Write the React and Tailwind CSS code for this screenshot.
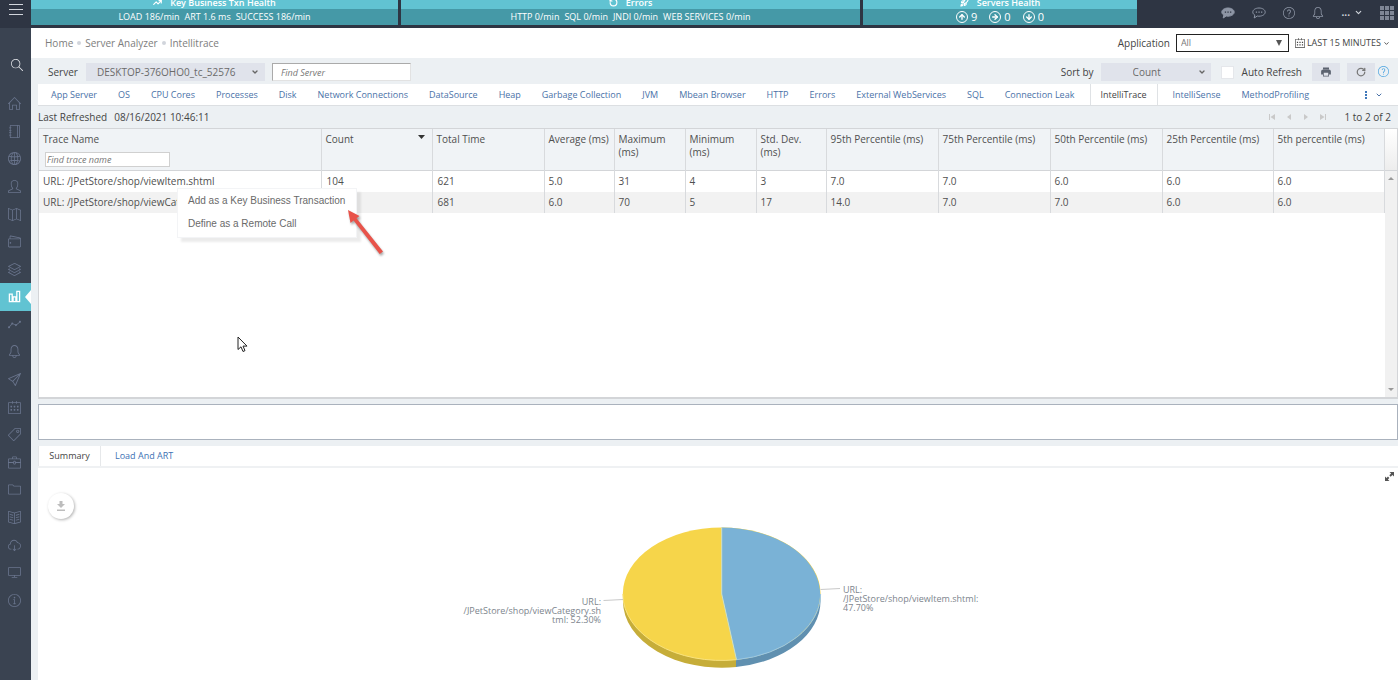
import { useState } from 'react';
import {
  SlHome, SlNotebook, SlGlobe, SlUser, SlMap, SlWallet, SlLayers, SlGraph, SlBell,
  SlPaperPlane, SlCalender, SlTag, SlBriefcase, SlFolder, SlBookOpen, SlCloudDownload,
  SlScreenDesktop, SlInfo, SlMagnifier, SlQuestion,
} from 'react-icons/sl';
import { IoMdPrint } from 'react-icons/io';
import { ChevronDown, ArrowUp, ArrowRight, ArrowDown, TrendingUp, Rocket, RotateCw, RotateCcw } from 'lucide-react';

const BarsIcon = ({ className }) => (
  <svg viewBox="0 0 14 14" className={className} fill="none" stroke="currentColor" strokeWidth="1.4">
    <path d="M1.500 4.500h3v8h-3zM5.500 7.500h3v5h-3zM9.500 1.500h3v11h-3z" />
  </svg>
);

const BubbleIcon = ({ filled }) => (
  <svg viewBox="0 0 14 12" className="h-3 w-[14px]">
    <path
      d="M7 1c3.500 0 6.200 1.800 6.200 4.100S10.500 9.200 7 9.200c-.6 0-1.200 0-1.700-.2L2.200 11l.6-2.900C1.600 7.400.8 6.300.8 5.100.8 2.800 3.500 1 7 1z"
      fill={filled ? 'currentColor' : 'none'}
      stroke="currentColor"
    />
    <path d="M3.800 4.500h1.300v1.300H3.800zM6.400 4.500h1.300v1.300H6.400zM9 4.500h1.300v1.300H9z" fill={filled ? '#2e3543' : 'currentColor'} />
  </svg>
);

const navItems = [
  ['Home', SlHome], ['Notebook', SlNotebook], ['Web', SlGlobe], ['Users', SlUser], ['Map', SlMap],
  ['Wallet', SlWallet], ['Layers', SlLayers], ['Analyzer', BarsIcon], ['Trends', SlGraph],
  ['Alerts', SlBell], ['Send', SlPaperPlane], ['Calendar', SlCalender], ['Tags', SlTag],
  ['Briefcase', SlBriefcase], ['Folder', SlFolder], ['Docs', SlBookOpen],
  ['Cloud', SlCloudDownload], ['Desktop', SlScreenDesktop], ['Info', SlInfo],
];

const tabs = [
  'App Server', 'OS', 'CPU Cores', 'Processes', 'Disk', 'Network Connections', 'DataSource', 'Heap',
  'Garbage Collection', 'JVM', 'Mbean Browser', 'HTTP', 'Errors', 'External WebServices', 'SQL',
  'Connection Leak', 'IntelliTrace', 'IntelliSense', 'MethodProfiling',
];

const columns = [
  ['Trace Name', 'w-[282px]'], ['Count', 'w-[111px]'], ['Total Time', 'w-[112px]'],
  ['Average (ms)', 'w-[70px]'], ['Maximum (ms)', 'w-[71px]'], ['Minimum (ms)', 'w-[71px]'],
  ['Std. Dev. (ms)', 'w-[70px] pr-1'], ['95th Percentile (ms)', 'w-[112px]'],
  ['75th Percentile (ms)', 'w-[112px]'], ['50th Percentile (ms)', 'w-[112px]'],
  ['25th Percentile (ms)', 'w-[111px]'], ['5th percentile (ms)', 'w-[111px]'],
];

const rows = [
  ['URL: /JPetStore/shop/viewItem.shtml', '104', '621', '5.0', '31', '4', '3', '7.0', '7.0', '6.0', '6.0', '6.0'],
  ['URL: /JPetStore/shop/viewCategory.shtml', '114', '681', '6.0', '70', '5', '17', '14.0', '7.0', '7.0', '6.0', '6.0'],
];

const HealthCard = ({ icon, title, className, children }) => (
  <section className={`flex flex-col text-white ${className}`}>
    <h2 className="flex h-[9px] items-center justify-center gap-2 bg-[#61c3d2] pb-1 text-[9px] leading-3 font-semibold">
      {icon}
      {title}
    </h2>
    <div className="flex h-4 items-center justify-center gap-[5px] bg-[#4599a7] text-[9px] whitespace-nowrap">
      {children}
    </div>
  </section>
);

const ServerCount = ({ icon: Icon, value }) => (
  <span className="flex items-center gap-[3px] text-[11px]">
    <span className="flex size-3 items-center justify-center rounded-full border border-white">
      <Icon className="size-2" strokeWidth={4} />
    </span>
    {value}
  </span>
);

const TopBar = () => (
  <header className="flex h-7 bg-[#2e3543]">
    <button aria-label="Menu" className="flex w-[31px] shrink-0 flex-col items-center gap-1 pt-1">
      <span className="h-px w-[14px] bg-gray-300" />
      <span className="h-px w-[14px] bg-gray-300" />
      <span className="h-px w-[14px] bg-gray-300" />
    </button>
    <div className="flex flex-1 gap-[3px]">
      <HealthCard className="flex-[367]" title="Key Business Txn Health" icon={<TrendingUp className="size-[9px]" strokeWidth={3} />}>
        <span>LOAD 186/min</span>
        <span>ART 1.6 ms</span>
        <span>SUCCESS 186/min</span>
      </HealthCard>
      <HealthCard className="flex-[459]" title="Errors" icon={<RotateCcw className="size-[9px]" strokeWidth={3} />}>
        <span>HTTP 0/min</span>
        <span>SQL 0/min</span>
        <span>JNDI 0/min</span>
        <span>WEB SERVICES 0/min</span>
      </HealthCard>
      <HealthCard className="flex-[274]" title="Servers Health" icon={<Rocket className="size-[9px]" strokeWidth={3} />}>
        <div className="flex gap-3">
          <ServerCount icon={ArrowUp} value="9" />
          <ServerCount icon={ArrowRight} value="0" />
          <ServerCount icon={ArrowDown} value="0" />
        </div>
      </HealthCard>
    </div>
    <div className="flex w-[261px] shrink-0 items-center justify-end gap-[17px] pr-1 pb-[3px] text-[#8d95a5]">
      <button aria-label="Chat"><BubbleIcon filled /></button>
      <button aria-label="Feedback"><BubbleIcon /></button>
      <button aria-label="Help"><SlQuestion className="size-3" /></button>
      <button aria-label="Notifications"><SlBell className="size-3" /></button>
      <button aria-label="Account" className="flex items-center gap-1 text-[10px] font-bold text-gray-300">
        ... <ChevronDown className="size-[9px]" strokeWidth={3} />
      </button>
      <button aria-label="Apps" className="grid grid-cols-3 gap-px">
        {[...Array(9)].map((_, i) => <span key={i} className="size-1 bg-[#7f8695]" />)}
      </button>
    </div>
  </header>
);

const Sidebar = () => (
  <aside className="flex w-[31px] shrink-0 flex-col bg-[#3a4351]">
    <button aria-label="Search" className="flex h-[62px] items-center justify-center pt-3 pl-[2px] text-gray-200">
      <SlMagnifier className="size-3" />
    </button>
    <nav className="grid h-[524px] auto-rows-fr">
      {navItems.map(([label, Icon]) => {
        const active = label === 'Analyzer';
        return (
          <a
            key={label}
            href="#"
            aria-label={label}
            className={`relative flex items-center pl-2 ${active ? 'bg-[#61c3d2] text-white' : 'text-[#69748c]'}`}
          >
            <Icon className="size-[13px]" />
            {active && (
              <span className="absolute top-1/2 right-0 -translate-y-1/2 border-y-[7px] border-r-[6px] border-y-transparent border-r-white" />
            )}
          </a>
        );
      })}
    </nav>
  </aside>
);

const PagerIcon = ({ label, d }) => (
  <button aria-label={label}>
    <svg viewBox="0 0 8 8" className="size-2 fill-[#c9c9c9]"><path d={d} /></svg>
  </button>
);

const ContextMenu = () => (
  <div className="absolute top-[15px] left-[134px] z-10 flex w-[180px] flex-col border border-gray-100 bg-white py-[1px] font-['Liberation_Sans',sans-serif] text-[10px] text-[#6a6a6a] shadow-[4px_4px_2px_rgba(0,0,0,0.08)]">
    <button className="h-[23px] px-[10px] text-left whitespace-nowrap">Add as a Key Business Transaction</button>
    <button className="h-[23px] px-[10px] text-left whitespace-nowrap">Define as a Remote Call</button>
    <svg viewBox="0 0 44 52" className="absolute top-[18px] left-[166px] h-[52px] w-11 drop-shadow-[1px_2px_1px_rgba(0,0,0,0.35)]">
      <path d="M4 3l11.500 6-3 2.300L39 44.500l-3.300 2.600L9.600 13.600 6.500 16z" fill="#e8534a" />
    </svg>
  </div>
);

const TraceTable = () => (
  <div className="relative flex h-[271px] border border-b-2 border-[#d3d5d8] bg-white">
    <div className="flex-1">
      <table className="w-full table-fixed border-collapse text-left text-[10px] text-[#4f4f4f]">
        <thead>
          <tr className="h-[41px] border-b border-[#d3d5d8] bg-[#f0f3f6]">
            {columns.map(([name, width], i) => (
              <th key={name} className={`border-r border-[#d8dadd] pt-1 pl-1 align-top leading-[13px] font-normal ${width}`}>
                {i === 1 ? (
                  <span className="flex items-start justify-between pr-[7px]">
                    Count
                    <svg viewBox="0 0 7 4" className="mt-[2px] h-1 w-[7px] fill-[#333]"><path d="M0 0h7L3.500 4z" /></svg>
                  </span>
                ) : name}
                {i === 0 && (
                  <input
                    aria-label="Find trace name"
                    placeholder="Find trace name"
                    className="mt-[6px] ml-[2px] block h-[15px] w-[125px] border border-[#d0d0d0] bg-white px-[1px] text-[9px] italic placeholder:text-[#777]"
                  />
                )}
              </th>
            ))}
          </tr>
        </thead>
        <tbody>
          {rows.map((row, r) => (
            <tr key={row[0]} className={r ? 'h-[21px] bg-[#f2f2f2]' : 'h-[22px]'}>
              {row.map((cell, i) => (
                <td key={i} className={`border-r border-[#d8dadd] p-0 pb-px leading-4 whitespace-nowrap ${i === 1 || i === 2 ? 'pl-[5px]' : 'pl-1'}`}>
                  {r === 0 && i === 0 ? <div className="relative">{cell}<ContextMenu /></div> : cell}
                </td>
              ))}
            </tr>
          ))}
        </tbody>
      </table>
    </div>
    <div className="flex w-[13px] flex-col">
      <div className="h-[42px] border-b border-[#d3d5d8] bg-gradient-to-b from-white to-[#ededed]" />
      <div className="flex flex-1 flex-col items-center justify-between bg-[#f1f1f1] py-[6px]">
        <svg viewBox="0 0 6 3" className="h-[3px] w-[6px] fill-[#999]"><path d="M3 0l3 3H0z" /></svg>
        <svg viewBox="0 0 6 3" className="h-[3px] w-[6px] fill-[#999]"><path d="M3 3l3-3H0z" /></svg>
      </div>
    </div>
    {/* mouse pointer */}
    <svg viewBox="0 0 11 17" className="absolute top-[207px] left-[198px] h-[17px] w-[11px]">
      <path d="M1 1v12.500l3-2.700 2 4.700 2-.9-2-4.500h4z" fill="#fff" stroke="#222" />
    </svg>
  </div>
);

const PieChart = () => (
  <div className="flex items-start justify-center pt-[22px] pl-2 text-[9px] leading-[9px] text-[#7d858d]">
    <p className="mt-[72px] w-[138px] text-right">
      URL:<br />/JPetStore/shop/viewCategory.sh<br />tml: 52.30%
    </p>
    <svg viewBox="601 525 242 145" className="h-[145px] w-[242px]">
      <path d="M623 594v7a99 66.500 0 0 0 113.500 66v-7z" fill="#c6ad39" />
      <path d="M820.500 594v7a99 66.500 0 0 1-84.500 66v-8z" fill="#6090b0" />
      <ellipse cx="721.700" cy="594" rx="98.900" ry="66.500" fill="#f6d54a" />
      <path d="M721.700 527.500a98.900 66.500 0 0 1 14.800 132.200L721.700 594z" fill="#7ab2d6" />
      <path d="M721.700 527.500V594l14.800 65.700" fill="none" stroke="#cfe0c4" />
      <path d="M820.600 594a98.900 66.500 0 0 1-84.100 65.700" fill="none" stroke="#9cc8e4" />
      <path d="M622.800 594a98.900 66.500 0 0 0 113.700 65.700" fill="none" stroke="#f9e37f" />
      <path d="M603.500 600.500l19.500-1M820.500 589.500l19.500-1" stroke="#c9c9c9" />
    </svg>
    <p className="mt-[60px] w-[138px]">
      URL:<br />/JPetStore/shop/viewItem.shtml:<br />47.70%
    </p>
  </div>
);

const App = () => {
  const [tab, setTab] = useState('IntelliTrace');

  return (
    <div className="flex h-screen flex-col overflow-hidden bg-white pb-[2px] font-['Open_Sans',sans-serif] text-[10px] text-[#444]">
      <TopBar />
      <div className="flex min-h-0 flex-1">
        <Sidebar />
        <main className="flex min-w-0 flex-1 flex-col bg-[#ecf0f3]">
          <div className="flex h-[30px] shrink-0 items-center justify-between bg-white pr-2 pl-[14px]">
            <nav className="flex items-center gap-1 text-[#7d7d7d]">
              <a href="#">Home</a>
              <span className="size-1 rounded-full bg-gray-300" />
              <a href="#">Server Analyzer</a>
              <span className="size-1 rounded-full bg-gray-300" />
              <a href="#">Intellitrace</a>
            </nav>
            <div className="flex items-center gap-[6px]">
              <label htmlFor="application">Application</label>
              <div className="relative">
                <select id="application" className="h-[18px] w-[113px] appearance-none border border-[#222] bg-white px-1 text-[9px] text-[#777]">
                  <option>All</option>
                </select>
                <svg viewBox="0 0 6 6" className="pointer-events-none absolute top-[6px] right-[7px] size-[6px] fill-[#555]"><path d="M0 0h6L3 6z" /></svg>
              </div>
              <button className="flex items-center gap-[2px] text-[9px]">
                <SlCalender className="size-[10px]" />
                LAST 15 MINUTES
                <ChevronDown className="size-[7px]" strokeWidth={3} />
              </button>
            </div>
          </div>

          <div className="flex h-[26px] shrink-0 items-center justify-between pt-[2px] pr-[9px] pl-[17px]">
            <div className="flex items-center">
              <label htmlFor="server" className="w-[38px]">Server</label>
              <div className="relative">
                <select id="server" className="h-[18px] w-[179px] appearance-none bg-[#e0e3eb] pl-[11px] text-[#6a6a6a]">
                  <option>DESKTOP-376OHO0_tc_52576</option>
                </select>
                <ChevronDown className="pointer-events-none absolute top-[5px] right-[6px] size-2 text-[#666]" strokeWidth={4} />
              </div>
              <input
                aria-label="Find Server"
                placeholder="Find Server"
                className="ml-[7px] h-[18px] w-[139px] border border-[#e2e2e2] border-t-[#aaa] border-l-[#aaa] bg-white px-2 text-[9px] italic placeholder:text-[#777]"
              />
            </div>
            <div className="flex items-center">
              <label htmlFor="sort" className="mr-[7px]">Sort by</label>
              <div className="relative">
                <select id="sort" className="h-[18px] w-[110px] appearance-none bg-[#e0e3eb] pl-8 text-[#6a6a6a]">
                  <option>Count</option>
                </select>
                <ChevronDown className="pointer-events-none absolute top-[5px] right-[5px] size-2 text-[#666]" strokeWidth={4} />
              </div>
              <input id="auto" type="checkbox" className="mr-2 ml-[10px] size-[13px] appearance-none border border-gray-200 bg-white" />
              <label htmlFor="auto">Auto Refresh</label>
              <button aria-label="Print" className="ml-[10px] flex h-[18px] w-7 items-center justify-center bg-[#e0e3eb] text-[#5c6370]">
                <IoMdPrint className="size-3" />
              </button>
              <button aria-label="Refresh" className="ml-[7px] flex h-[18px] w-7 items-center justify-center bg-[#e0e3eb] text-[#777]">
                <RotateCw className="size-[10px]" strokeWidth={3} />
              </button>
              <button aria-label="Help" className="ml-[3px] pb-[2px] text-[#4ba3e0]"><SlQuestion className="size-[11px]" /></button>
            </div>
          </div>

          <div className="flex min-h-0 flex-1 flex-col pl-[7px]">
            <div className="flex h-[22px] shrink-0 items-stretch border-b border-[#dcdfe2] bg-white pl-[3px] text-[9px] text-[#4a72a8]">
              {tabs.map((name) => (
                <button
                  key={name}
                  onClick={() => setTab(name)}
                  className={`border-x pr-[10px] pl-[9px] whitespace-nowrap ${name === 'IntelliTrace' ? 'mx-[5px]' : ''} ${tab === name ? 'border-[#dfe2e5] text-[#444]' : 'border-transparent'}`}
                >
                  {name}
                </button>
              ))}
              <div className="ml-auto flex items-center gap-2 pr-[15px]">
                <button aria-label="More" className="flex flex-col gap-px">
                  <span className="size-[2px] bg-[#3f78ba]" />
                  <span className="size-[2px] bg-[#3f78ba]" />
                  <span className="size-[2px] bg-[#3f78ba]" />
                </button>
                <button aria-label="Expand tabs"><ChevronDown className="size-2" strokeWidth={3} /></button>
              </div>
            </div>

            <div className="flex h-[22px] shrink-0 items-center justify-between pr-[7px]">
              <div className="flex gap-[7px]">
                <span>Last Refreshed</span>
                <span>08/16/2021 10:46:11</span>
              </div>
              <div className="flex items-center gap-[9px]">
                <PagerIcon label="First page" d="M1 1h1v6H1zM7 1v6L2.500 4z" />
                <PagerIcon label="Previous page" d="M6 1v6L2 4z" />
                <PagerIcon label="Next page" d="M2 1v6l4-3z" />
                <PagerIcon label="Last page" d="M6 1h1v6H6zM1 1v6l4.500-3z" />
                <span className="ml-2">1 to 2 of 2</span>
              </div>
            </div>

            <div className="shrink-0"><TraceTable /></div>
            <div className="mt-[5px] h-9 shrink-0 border border-[#aab2bd] bg-white" />

            <div className="mt-[6px] flex h-[22px] shrink-0 border-b-2 border-[#eff1f3] bg-white text-[9px]">
              <button className="w-[63px] border-x border-[#e6e8ea]">Summary</button>
              <button className="px-[14px] text-[#4072b4]">Load And ART</button>
            </div>
            <section className="relative min-h-0 flex-1 bg-white pt-[35px]">
              <button aria-label="Download chart" className="absolute top-[25px] left-[10px] flex size-[26px] items-center justify-center rounded-full bg-white shadow-[1px_1px_3px_rgba(0,0,0,0.3)]">
                <svg viewBox="0 0 10 10" className="size-[10px] fill-[#bdbdbd]"><path d="M3.500 0h3v3H9L5 7 1 3h2.500zM1 8.500h8V10H1z" /></svg>
              </button>
              <button aria-label="Maximize" className="absolute top-[4px] right-1">
                <svg viewBox="0 0 10 10" className="size-[9px] fill-[#555]"><path d="M5 0h5v5L8.300 3.300 6.300 5.200 4.800 3.700l2-2zM0 5l1.700 1.700 1.600-1.600 1.500 1.500-1.600 1.600L5 10H0z" /></svg>
              </button>
              <PieChart />
            </section>
          </div>
        </main>
      </div>
    </div>
  );
};

export default App;
